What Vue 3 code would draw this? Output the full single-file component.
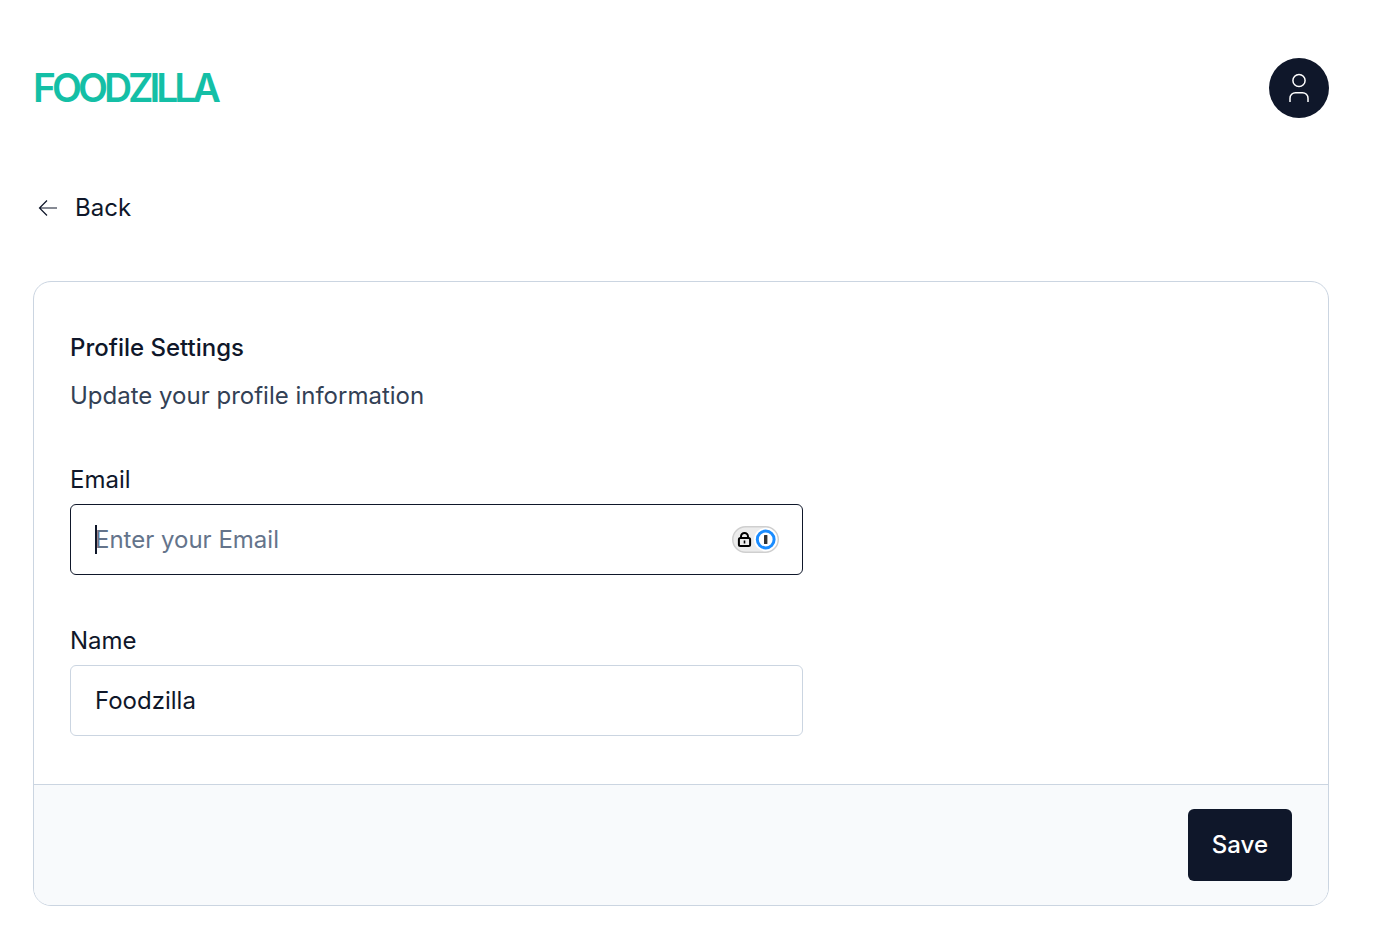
<script setup>
import { ref } from 'vue'

const email = ref('')
const name = ref('Foodzilla')
</script>

<template>
  <div class="page">
    <header class="header">
      <a class="logo" href="#">FOODZILLA</a>
      <button class="avatar" type="button" aria-label="Account">
        <svg width="36" height="36" viewBox="0 0 36 36" fill="none" stroke="currentColor" stroke-width="1.5" aria-hidden="true">
          <circle cx="18" cy="10.5" r="6.1" />
          <path d="M9 32v-3.800a5.500 5.500 0 0 1 5.500-5.500h7a5.500 5.500 0 0 1 5.500 5.500V32" />
        </svg>
      </button>
    </header>

    <a class="back" href="#">
      <svg width="20" height="18" viewBox="0 0 20 18" fill="none" stroke="currentColor" stroke-width="1.2" aria-hidden="true">
        <path d="M19 9H1.5M9 1.5L1.5 9L9 16.5" />
      </svg>
      <span>Back</span>
    </a>

    <form class="card" @submit.prevent>
      <div class="body">
        <div class="intro">
          <h1>Profile Settings</h1>
          <p>Update your profile information</p>
        </div>
        <div class="field">
          <label for="email">Email</label>
          <div class="control">
            <input id="email" v-model="email" class="active" type="email" placeholder="Enter your Email" />
            <span class="caret"></span>
            <button class="vault" type="button" aria-label="Fill from password manager">
              <svg width="47" height="27" viewBox="0 0 47 27" fill="none" aria-hidden="true">
                <rect x=".75" y=".75" width="45.5" height="25.5" rx="12.75" fill="#ececec" stroke="#cfcfcf" stroke-width="1.5" />
                <circle cx="33.7" cy="13.5" r="11.7" fill="#fff" />
                <circle cx="33.7" cy="13.5" r="8.4" stroke="#1a8cff" stroke-width="3" />
                <rect x="32" y="9" width="3.4" height="9" rx=".5" fill="#333" />
                <rect x="6.9" y="12" width="11.2" height="8" rx="1.5" stroke="#000" stroke-width="2" />
                <path d="M9 12V10.500a3.500 3.500 0 0 1 7 0V12" stroke="#000" stroke-width="2" />
                <path d="M12.500 14.500v3" stroke="#000" stroke-width="1.600" />
              </svg>
            </button>
          </div>
        </div>
        <div class="field">
          <label for="name">Name</label>
          <div class="control">
            <input id="name" v-model="name" type="text" />
          </div>
        </div>
      </div>
      <footer class="footer">
        <button class="save" type="submit">Save</button>
      </footer>
    </form>
  </div>
</template>

<style>
body {
  margin: 0;
  background: #fff;
}
</style>

<style scoped>
.page {
  padding: 58px 50px 27px 33px;
  color: #0f172a;
  font-family: Inter, "Liberation Sans", sans-serif;
  font-size: 24px;
  line-height: 36px;
}

.page *,
.page {
  box-sizing: border-box;
}

a {
  color: inherit;
  text-decoration: none;
}

button,
input {
  font: inherit;
}

.header {
  display: flex;
  align-items: center;
  justify-content: space-between;
}

.logo {
  color: #14bfa6;
  font-size: 39px;
  font-weight: 600;
  line-height: 48px;
  letter-spacing: -4px;
}

.avatar {
  display: flex;
  align-items: center;
  justify-content: center;
  width: 60px;
  height: 60px;
  padding: 0;
  border: 0;
  border-radius: 50%;
  background: #0f172a;
  color: #fff;
}

.back {
  display: inline-flex;
  align-items: center;
  gap: 17px;
  margin: 72px 0 55px;
  padding-left: 5px;
  vertical-align: top;
}

.card {
  border: 1px solid #cbd5e1;
  border-radius: 18px;
  overflow: hidden;
}

.body {
  display: flex;
  flex-direction: column;
  gap: 48px;
  padding: 48px 36px;
}

.intro {
  display: flex;
  flex-direction: column;
  gap: 12px;
}

h1,
p {
  margin: 0;
}

h1 {
  font-size: 24px;
  font-weight: 500;
}

p {
  color: #334155;
}

.field {
  display: flex;
  flex-direction: column;
  gap: 6px;
  width: 60%;
}

.control {
  position: relative;
}

input {
  display: block;
  width: 100%;
  height: 71px;
  padding: 0 24px;
  border: 1px solid #cbd5e1;
  border-radius: 6px;
  outline: none;
  background: #fff;
  color: #0f172a;
}

input::placeholder {
  color: #64748b;
  opacity: 1;
}

input.active,
input:focus {
  border-color: #0f172a;
}

.caret {
  position: absolute;
  top: 21px;
  left: 25px;
  width: 2px;
  height: 29px;
  background: #0f172a;
}

.vault {
  position: absolute;
  top: 22px;
  right: 24px;
  display: flex;
  padding: 0;
  border: 0;
  background: none;
}

.footer {
  display: flex;
  justify-content: flex-end;
  padding: 24px 36px;
  border-top: 1px solid #cbd5e1;
  background: #f8fafc;
}

.save {
  padding: 18px 24px;
  border: 0;
  border-radius: 6px;
  background: #0f172a;
  color: #fff;
  font-weight: 500;
}
</style>
